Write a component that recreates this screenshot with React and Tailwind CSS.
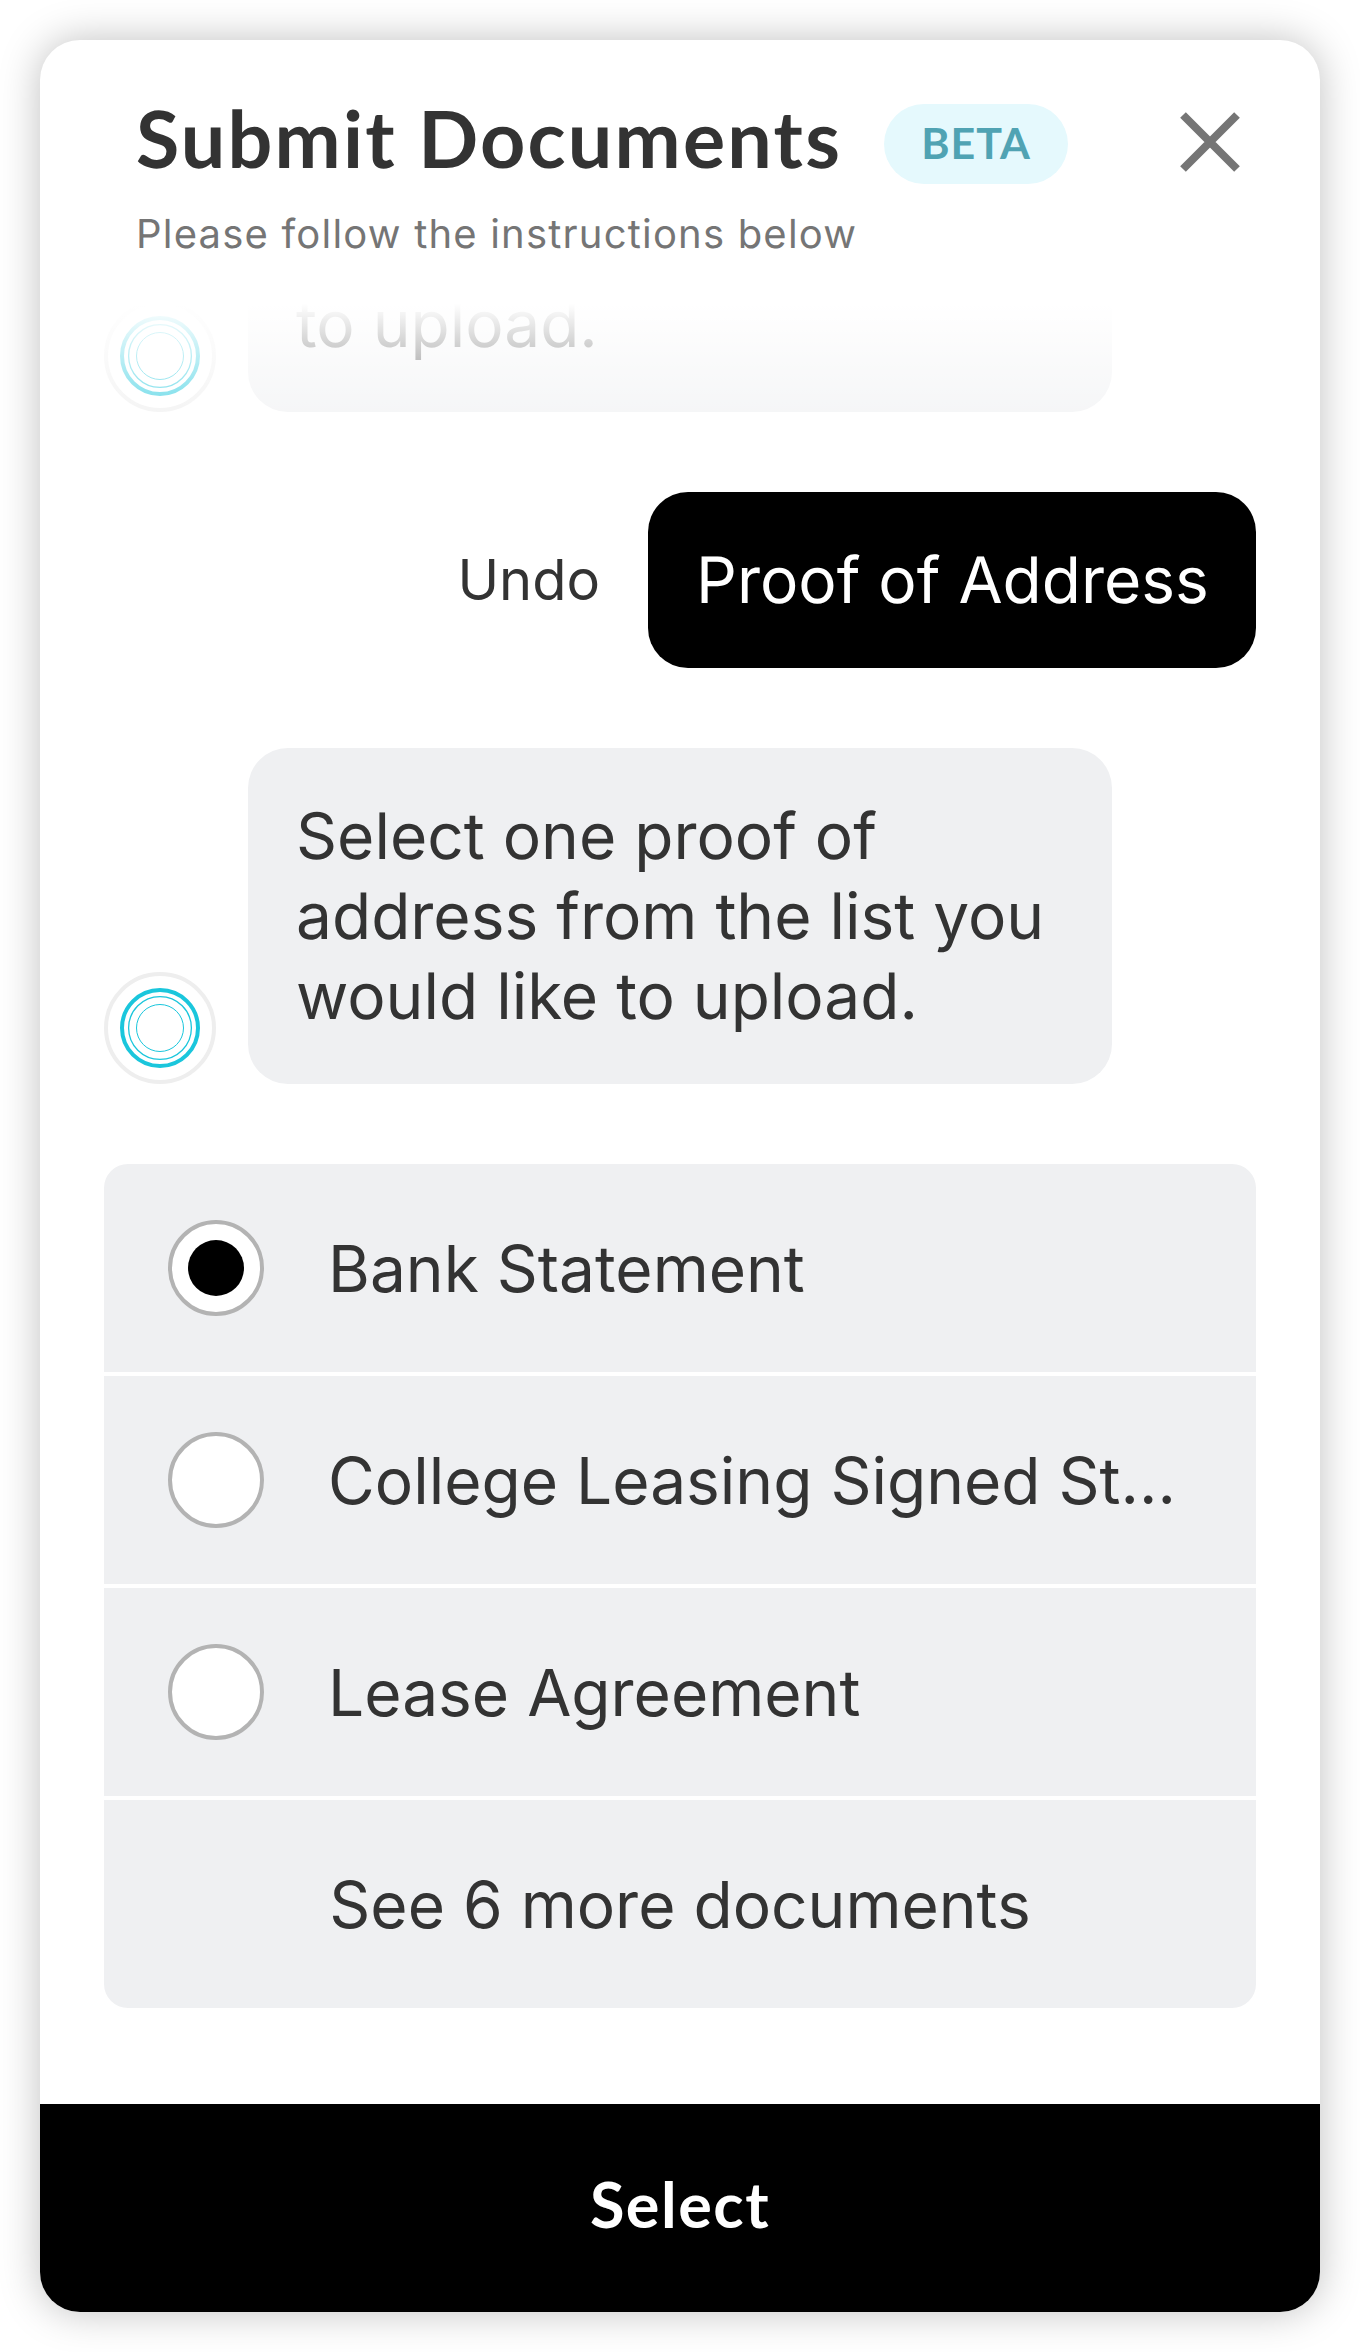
import React, { useState } from 'react';

const documents = [
  'Bank Statement',
  'College Leasing Signed St...',
  'Lease Agreement',
];

const Avatar = () => (
  <svg className="size-28 shrink-0" viewBox="0 0 112 112" fill="none">
    <circle cx="56" cy="56" r="54" fill="white" stroke="#eeeeee" strokeWidth="4" />
    <circle cx="56" cy="56" r="38" stroke="#1ac6dc" strokeWidth="4" />
    <circle cx="56" cy="56" r="31.4" stroke="#1ac6dc" strokeWidth="1.3" />
    <circle cx="56" cy="56" r="23.5" stroke="#1ac6dc" strokeWidth="1" />
  </svg>
);

const Header = () => (
  <header className="h-[244px] shrink-0 pt-16 pl-24 pr-20">
    <div className="flex h-20 items-start">
      <h1 className="w-[748px] shrink-0 whitespace-nowrap font-[Lato] text-[79px] leading-[67px] font-bold tracking-[2.2px]">
        Submit Documents
      </h1>
      <span className="flex h-20 w-46 items-center justify-center rounded-full bg-[#e5f9fd] font-[Lato] text-[43px] font-bold tracking-[1px] text-[#50a3b3]">
        BETA
      </span>
      <button type="button" aria-label="Close" className="mt-2 ml-auto">
        <svg className="size-15" viewBox="0 0 60 60" fill="none">
          <path d="M3 3L57 57M57 3L3 57" stroke="#757575" strokeWidth="8" />
        </svg>
      </button>
    </div>
    <p className="mt-6 text-[40px] leading-[52px] tracking-[1.2px] text-[#757575]">
      Please follow the instructions below
    </p>
  </header>
);

export default function App() {
  const [selected, setSelected] = useState(documents[0]);

  return (
    <div className="h-[2352px] bg-white p-10 font-[Inter,sans-serif] text-[#333333] [text-rendering:geometricPrecision]">
      <div className="flex h-[2272px] w-[1280px] flex-col overflow-hidden rounded-[40px] bg-white shadow-[0_0_40px_rgba(0,0,0,0.25)]">
        <Header />

        <main className="relative flex flex-1 flex-col gap-20 overflow-hidden px-16 pt-4 text-[64px] leading-[80px]">
          {/* Scrolled message */}
          <div className="flex h-28 shrink-0 items-end gap-8">
            <Avatar />
            <div className="flex h-28 w-[864px] items-end rounded-b-[40px] bg-[#eff0f2] px-12 pb-[47px]">
              to upload.
            </div>
          </div>

          {/* User answer */}
          <div className="flex items-center justify-end gap-12">
            <button type="button" className="text-[56px]">Undo</button>
            <div className="w-[608px] rounded-[40px] bg-black px-12 pt-[49px] pb-[47px] whitespace-nowrap text-white">
              Proof of Address
            </div>
          </div>

          <div className="flex items-end gap-8">
            <Avatar />
            <div className="w-[864px] rounded-[40px] bg-[#eff0f2] px-12 pt-[49px] pb-[47px] whitespace-nowrap">
              Select one proof of<br />
              address from the list you<br />
              would like to upload.
            </div>
          </div>

          {/* Document options */}
          <div className="flex flex-col gap-1 overflow-hidden rounded-3xl">
            {documents.map((doc) => (
              <button
                key={doc}
                type="button"
                onClick={() => setSelected(doc)}
                className="flex h-52 items-center gap-16 bg-[#eff0f2] pl-16 text-left whitespace-nowrap"
              >
                <span className="flex size-24 shrink-0 items-center justify-center rounded-full border-4 border-[#b3b3b3] bg-white">
                  {selected === doc && <span className="size-14 rounded-full bg-black" />}
                </span>
                <span className="pt-0.5">{doc}</span>
              </button>
            ))}
            <button type="button" className="h-52 bg-[#eff0f2] pt-0.5">
              See 6 more documents
            </button>
          </div>

          {/* Fade under the header */}
          <div className="pointer-events-none absolute inset-x-0 top-0 h-50 bg-linear-to-b from-white from-10% to-white/0" />
        </main>

        <button
          type="button"
          className="h-52 shrink-0 bg-black pb-2 font-[Lato] text-[63px] font-bold tracking-[1.5px] text-white"
        >
          Select
        </button>
      </div>
    </div>
  );
}
